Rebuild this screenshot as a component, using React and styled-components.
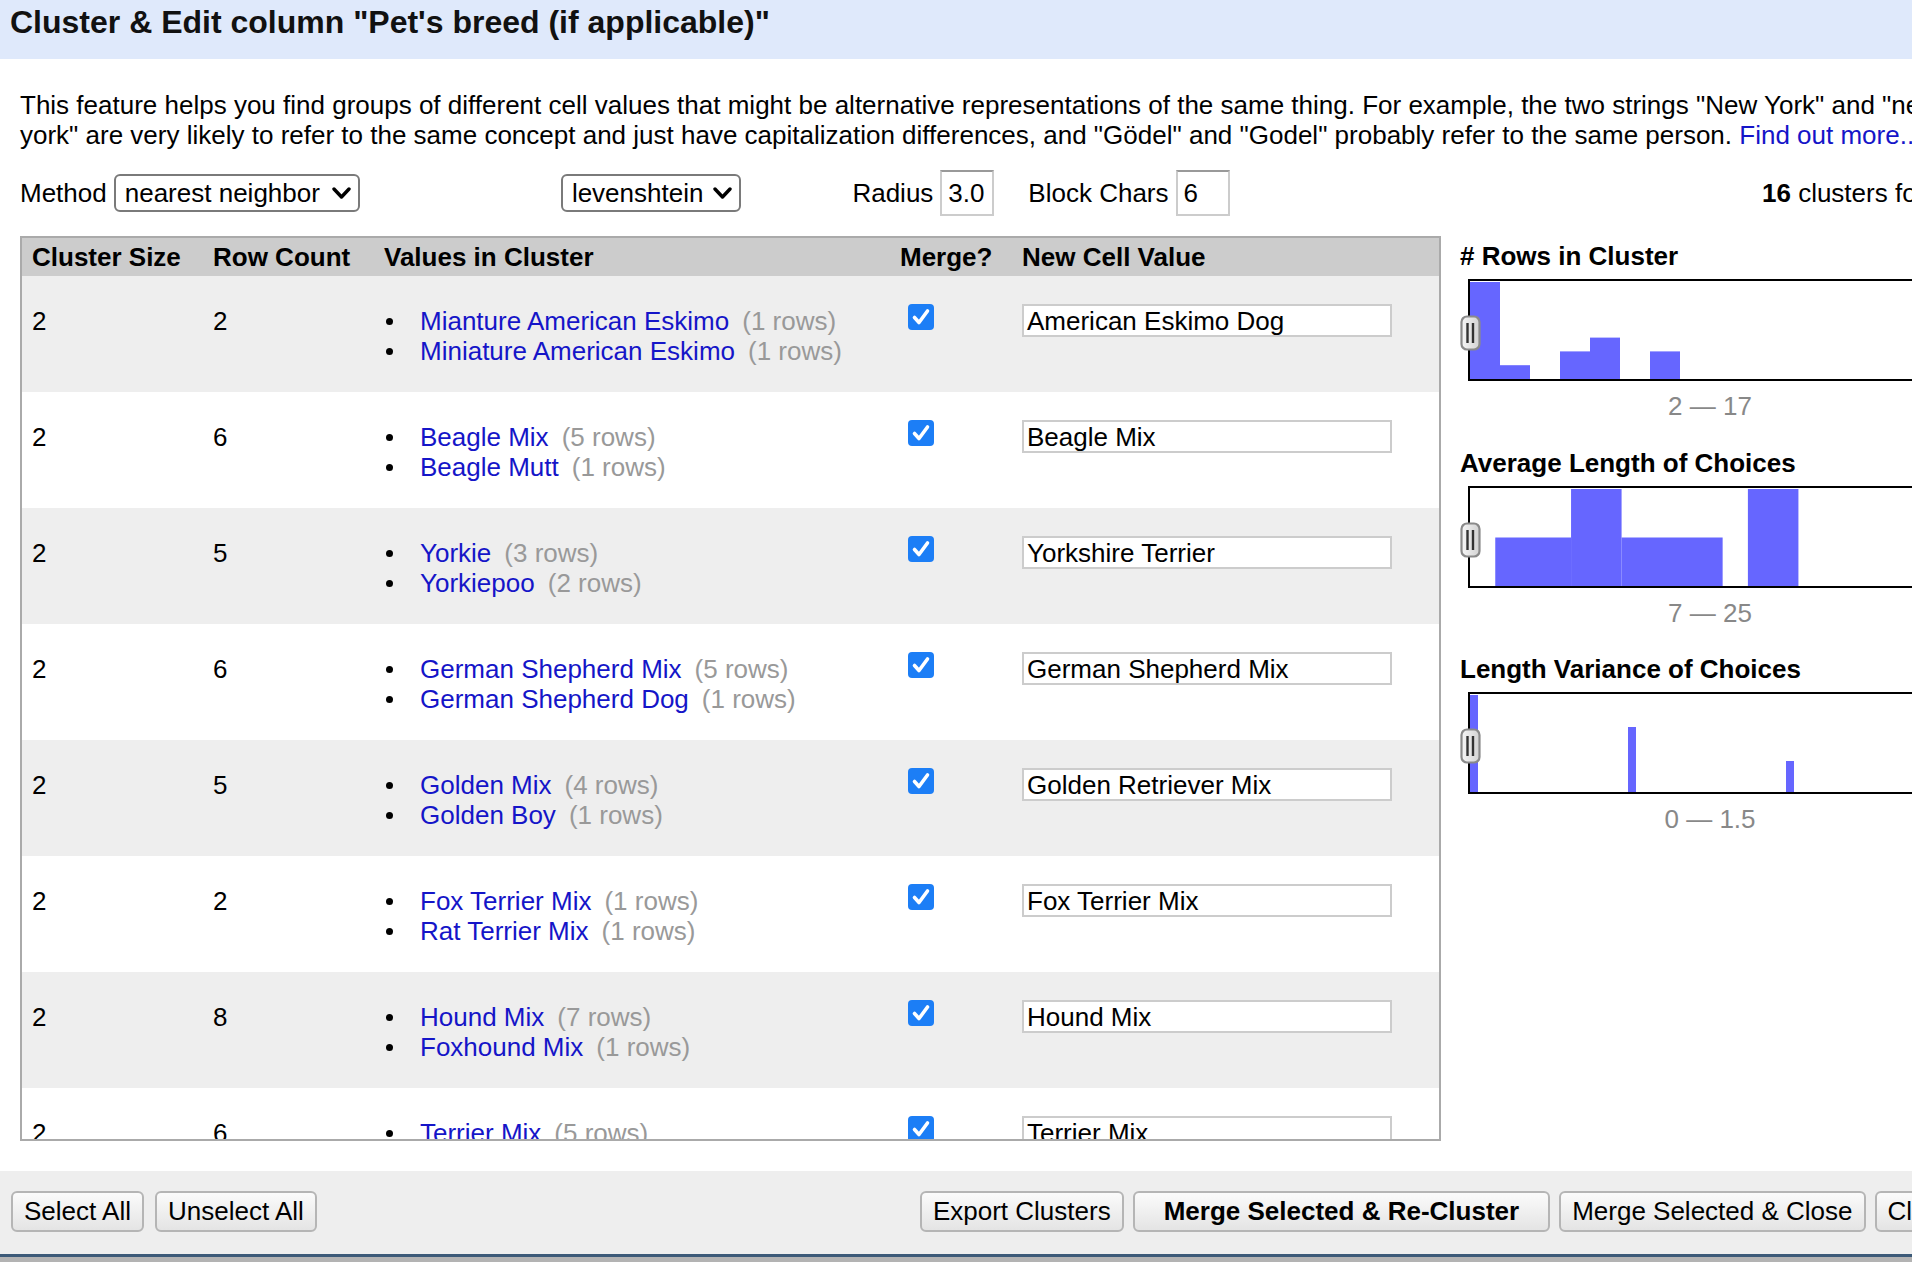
import React from "react";
import styled, { createGlobalStyle } from "styled-components";

const GlobalStyle = createGlobalStyle`
  html, body {
    margin: 0;
    padding: 0;
    overflow: hidden;
    background: #fff;
  }
  body {
    font-family: "Liberation Sans", Arial, Helvetica, sans-serif;
    font-size: 26px;
    color: #000;
  }
`;

const rows = [
  {
    size: 2,
    count: 2,
    values: [
      ["Mianture American Eskimo", 1],
      ["Miniature American Eskimo", 1],
    ],
    newValue: "American Eskimo Dog",
  },
  { size: 2, count: 6, values: [["Beagle Mix", 5], ["Beagle Mutt", 1]], newValue: "Beagle Mix" },
  { size: 2, count: 5, values: [["Yorkie", 3], ["Yorkiepoo", 2]], newValue: "Yorkshire Terrier" },
  {
    size: 2,
    count: 6,
    values: [
      ["German Shepherd Mix", 5],
      ["German Shepherd Dog", 1],
    ],
    newValue: "German Shepherd Mix",
  },
  { size: 2, count: 5, values: [["Golden Mix", 4], ["Golden Boy", 1]], newValue: "Golden Retriever Mix" },
  { size: 2, count: 2, values: [["Fox Terrier Mix", 1], ["Rat Terrier Mix", 1]], newValue: "Fox Terrier Mix" },
  { size: 2, count: 8, values: [["Hound Mix", 7], ["Foxhound Mix", 1]], newValue: "Hound Mix" },
  { size: 2, count: 6, values: [["Terrier Mix", 5], ["Terrier Mutt", 1]], newValue: "Terrier Mix" },
];

// bins of the average-length chart, merged where neighbours share a height
const bin2 = 480 / 19;
const histograms = [
  {
    title: "# Rows in Cluster",
    range: "2 \u2014 17",
    bars: [
      { x: 0, w: 30, h: 97 },
      { x: 30, w: 30, h: 13.8 },
      { x: 90, w: 30, h: 27.6 },
      { x: 120, w: 30, h: 41.4 },
      { x: 180, w: 30, h: 27.6 },
    ],
  },
  {
    title: "Average Length of Choices",
    range: "7 \u2014 25",
    bars: [
      { x: 1 * bin2, w: 3 * bin2, h: 48.5 },
      { x: 4 * bin2, w: 2 * bin2, h: 97 },
      { x: 6 * bin2, w: 4 * bin2, h: 48.5 },
      { x: 11 * bin2, w: 2 * bin2, h: 97 },
    ],
  },
  {
    title: "Length Variance of Choices",
    range: "0 \u2014 1.5",
    bars: [
      { x: 0, w: 8, h: 97 },
      { x: 158, w: 8, h: 65 },
      { x: 316, w: 8, h: 31 },
    ],
  },
];

const Dialog = styled.div`
  width: 1980px;
`;

const Header = styled.div`
  height: 59px;
  box-sizing: border-box;
  padding: 3px 10px 0;
  background: #dfe9fb;
`;

const Title = styled.h1`
  margin: 0;
  font-size: 32px;
  line-height: 38px;
  font-weight: bold;
  color: #111;
  white-space: nowrap;
`;

const Body = styled.div`
  padding: 0 20px;
`;

const Description = styled.p`
  margin: 31px 0 0;
  line-height: 30px;
  white-space: nowrap;
`;

const Link = styled.a`
  color: #1515c8;
  text-decoration: none;
`;

const Controls = styled.div`
  display: flex;
  align-items: center;
  height: 46px;
  margin-top: 20px;
`;

const ControlGroup = styled.div`
  display: flex;
  align-items: center;
  gap: 7px;
  margin-left: ${(p) => p.$ml || 0}px;
`;

const SelectBox = styled.div`
  display: inline-flex;
  align-items: center;
  gap: ${(p) => p.$gap || 12}px;
  height: 38px;
  box-sizing: border-box;
  padding: 0 7px 0 9px;
  border: 2px solid #7a7a7a;
  border-radius: 6px;
  background: #fff;
  white-space: nowrap;
`;

const SmallInput = styled.div`
  width: ${(p) => p.$w}px;
  height: 46px;
  box-sizing: border-box;
  padding: 0 6px;
  border: 2px solid #ccc;
  border-top-color: #999;
  display: flex;
  align-items: center;
`;

const Summary = styled.div`
  margin-left: auto;
  white-space: nowrap;
  b {
    font-weight: bold;
  }
`;

const Main = styled.div`
  display: flex;
  align-items: flex-start;
  margin-top: 20px;
`;

const TableFrame = styled.div`
  width: 1421px;
  height: 905px;
  box-sizing: border-box;
  border: 2px solid #aaa;
  overflow: hidden;
  flex-shrink: 0;
`;

const gridCols = "181px 171px 516px 122px 1fr";

const HeadRow = styled.div`
  display: grid;
  grid-template-columns: ${gridCols};
  height: 38px;
  align-items: center;
  background: #ccc;
  font-weight: bold;
`;

const Row = styled.div`
  display: grid;
  grid-template-columns: ${gridCols};
  height: 116px;
  box-sizing: border-box;
  padding-top: 30px;
  align-items: start;
  background: ${(p) => (p.$alt ? "#eee" : "#fff")};
`;

const Cell = styled.div`
  padding-left: 10px;
  line-height: 30px;
  white-space: nowrap;
`;

const ValueList = styled.ul`
  list-style: none;
  margin: 0;
  padding: 0 0 0 12px;
`;

const ValueItem = styled.li`
  display: flex;
  align-items: center;
  height: 30.5px;
  white-space: nowrap;
`;

const Bullet = styled.span`
  width: 7px;
  height: 7px;
  border-radius: 50%;
  background: #000;
  margin-right: 27px;
  flex-shrink: 0;
`;

const RowCount = styled.span`
  color: #999;
  margin-left: 13px;
`;

const CheckWrap = styled.div`
  margin: -2px 0 0 18px;
  width: 26px;
  height: 26px;
`;

const CellInput = styled.div`
  width: 370px;
  height: 33px;
  box-sizing: border-box;
  margin-top: -2px;
  padding: 0 3px;
  border: 2px solid #ccc;
  background: #fff;
  display: flex;
  align-items: center;
  white-space: nowrap;
  overflow: hidden;
`;

const HistPane = styled.div`
  margin-left: 19px;
  padding-top: 5px;
`;

const HistBlock = styled.div`
  margin-bottom: 26.5px;
`;

const HistTitle = styled.div`
  font-weight: bold;
  line-height: 30px;
  white-space: nowrap;
`;

const HistBox = styled.div`
  position: relative;
  margin: 8px 0 0 8px;
  width: 484px;
  height: 102px;
  box-sizing: border-box;
  border: 2px solid #000;
  background: #fff;
`;

const Handle = styled.svg`
  position: absolute;
  left: -10px;
  top: 34px;
`;

const HistRange = styled.div`
  margin: 10px 0 0 8px;
  width: 484px;
  text-align: center;
  color: #888;
  line-height: 30px;
`;

const Footer = styled.div`
  margin-top: 30px;
  height: 83px;
  box-sizing: border-box;
  padding: 20px 13px 0 11px;
  background: #eee;
  display: flex;
  justify-content: space-between;
  align-items: flex-start;
`;

const ButtonGroup = styled.div`
  display: flex;
  gap: ${(p) => p.$gap || 11}px;
`;

const Button = styled.button`
  height: 41px;
  box-sizing: border-box;
  padding: 0 ${(p) => (p.$primary ? 29 : 11)}px;
  border: 2px solid #b5b5b5;
  border-radius: 6px;
  background: linear-gradient(#fbfbfb, #e4e4e4);
  font-family: "Liberation Sans", Arial, Helvetica, sans-serif;
  font-size: 26px;
  font-weight: ${(p) => (p.$primary ? "bold" : "normal")};
  color: #000;
  white-space: nowrap;
`;

const AppStrip = styled.div`
  height: 8px;
  border-top: 3px solid #3c5a78;
  background: #b3b3b3;
`;

const Chevron = () => (
  <svg width="19" height="13" viewBox="0 0 19 13">
    <polyline points="2,2 9.5,10 17,2" fill="none" stroke="#000" strokeWidth="3.4" strokeLinecap="round" strokeLinejoin="round" />
  </svg>
);

const CheckBox = () => (
  <CheckWrap>
    <svg width="26" height="26" viewBox="0 0 26 26">
      <rect x="0" y="0" width="26" height="26" rx="4" fill="#1c7ef6" />
      <polyline points="6.5,13.5 11,18.5 19.5,7" fill="none" stroke="#fff" strokeWidth="3.6" strokeLinecap="round" strokeLinejoin="round" />
    </svg>
  </CheckWrap>
);

const Histogram = ({ title, range, bars }) => (
  <HistBlock>
    <HistTitle>{title}</HistTitle>
    <HistBox>
      <svg width="480" height="98" viewBox="0 0 480 98" style={{ display: "block" }}>
        {bars.map((b, i) => (
          <rect key={i} x={b.x} y={98 - b.h} width={b.w} height={b.h} fill="#6666ff" />
        ))}
      </svg>
      <Handle width="21" height="36" viewBox="0 0 21 36">
        <defs>
          <linearGradient id="hg" x1="0" y1="0" x2="1" y2="0">
            <stop offset="0" stopColor="#f6f6f6" />
            <stop offset="1" stopColor="#d2d2d2" />
          </linearGradient>
        </defs>
        <rect x="1.5" y="1.5" width="18" height="33" rx="5.5" fill="url(#hg)" stroke="#8a8a8a" strokeWidth="2.2" />
        <line x1="7.5" y1="8" x2="7.5" y2="28" stroke="#333" strokeWidth="2.4" />
        <line x1="13" y1="8" x2="13" y2="28" stroke="#333" strokeWidth="2.4" />
      </Handle>
    </HistBox>
    <HistRange>{range}</HistRange>
  </HistBlock>
);

const App = () => {
  return (
    <Dialog>
      <GlobalStyle />
      <Header>
        <Title>Cluster &amp; Edit column "Pet's breed (if applicable)"</Title>
      </Header>
      <Body>
        <Description>
          This feature helps you find groups of different cell values that might be alternative representations of the
          same thing. For example, the two strings "New York" and "new
          <br />
          york" are very likely to refer to the same concept and just have capitalization differences, and "Gödel" and
          "Godel" probably refer to the same person. <Link href="#">Find out more...</Link>
        </Description>

        <Controls>
          <ControlGroup>
            <span>Method</span>
            <SelectBox>
              nearest neighbor
              <Chevron />
            </SelectBox>
          </ControlGroup>
          <ControlGroup $ml={201}>
            <SelectBox $gap={10}>
              levenshtein
              <Chevron />
            </SelectBox>
          </ControlGroup>
          <ControlGroup $ml={111}>
            <span>Radius</span>
            <SmallInput $w={54}>3.0</SmallInput>
          </ControlGroup>
          <ControlGroup $ml={34}>
            <span>Block Chars</span>
            <SmallInput $w={54}>6</SmallInput>
          </ControlGroup>
          <Summary>
            <b>16</b> clusters found
          </Summary>
        </Controls>

        <Main>
          <TableFrame>
            <HeadRow>
              <Cell>Cluster Size</Cell>
              <Cell>Row Count</Cell>
              <Cell>Values in Cluster</Cell>
              <Cell>Merge?</Cell>
              <Cell>New Cell Value</Cell>
            </HeadRow>
            {rows.map((row, index) => (
              <Row key={index} $alt={index % 2 === 0}>
                <Cell>{row.size}</Cell>
                <Cell>{row.count}</Cell>
                <ValueList>
                  {row.values.map(([name, n]) => (
                    <ValueItem key={name}>
                      <Bullet />
                      <Link href="#">{name}</Link>
                      <RowCount>({n} rows)</RowCount>
                    </ValueItem>
                  ))}
                </ValueList>
                <CheckBox />
                <Cell>
                  <CellInput>{row.newValue}</CellInput>
                </Cell>
              </Row>
            ))}
          </TableFrame>

          <HistPane>
            {histograms.map((h) => (
              <Histogram key={h.title} {...h} />
            ))}
          </HistPane>
        </Main>
      </Body>

      <Footer>
        <ButtonGroup>
          <Button>Select All</Button>
          <Button>Unselect All</Button>
        </ButtonGroup>
        <ButtonGroup $gap={9}>
          <Button>Export Clusters</Button>
          <Button $primary>Merge Selected &amp; Re-Cluster</Button>
          <Button>Merge Selected &amp; Close</Button>
          <Button>Close</Button>
        </ButtonGroup>
      </Footer>
      <AppStrip />
    </Dialog>
  );
};

export default App;
